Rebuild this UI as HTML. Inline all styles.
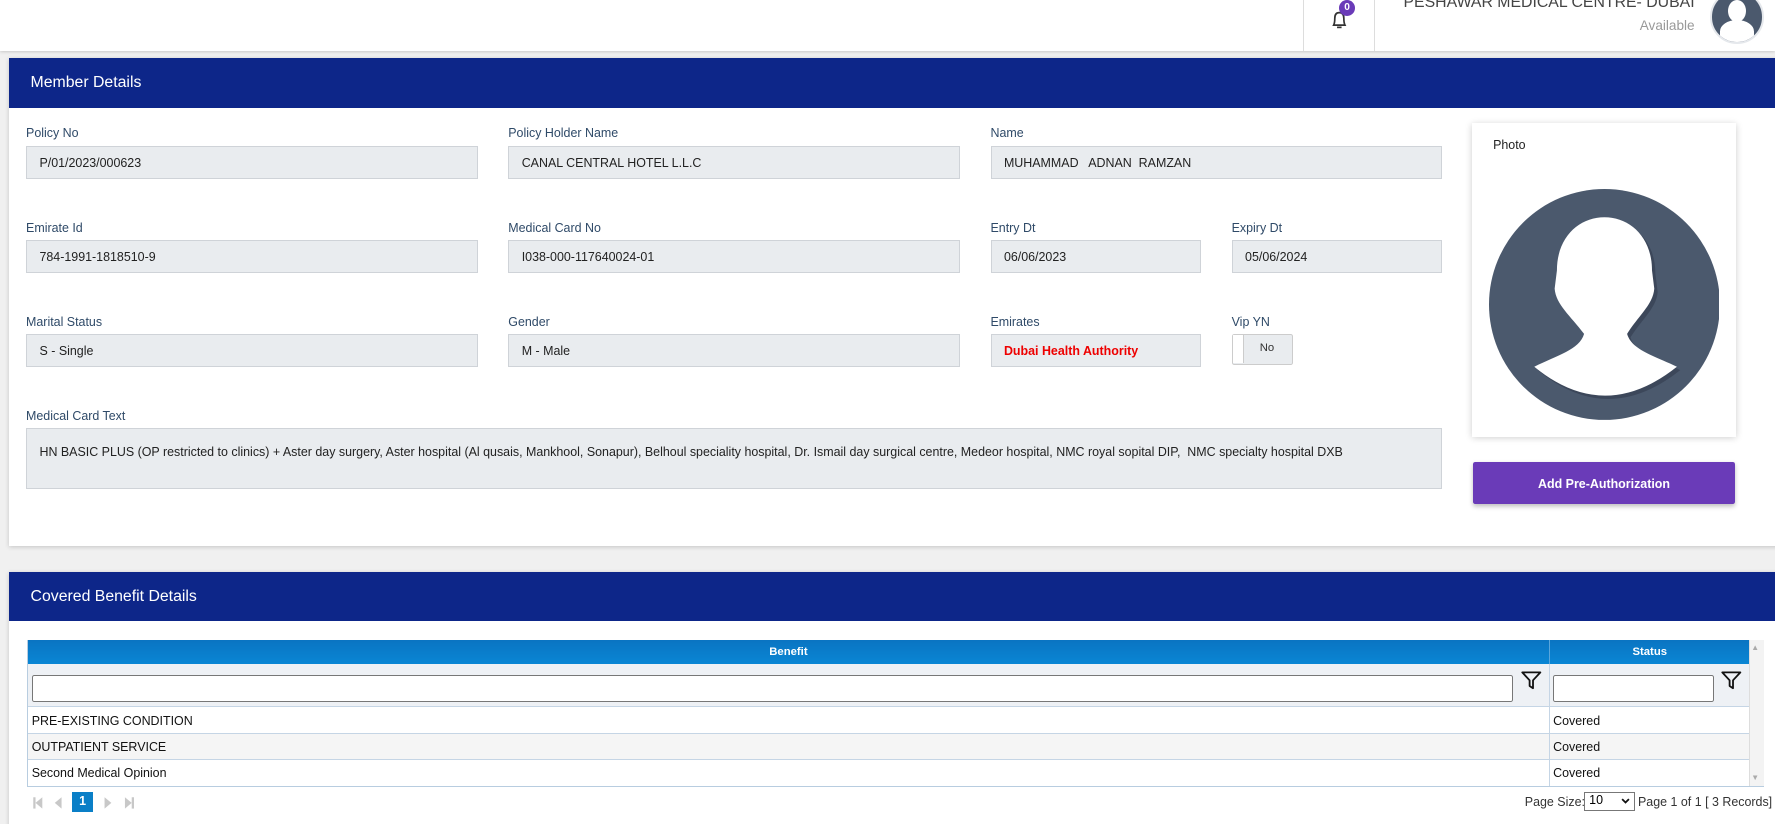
<!DOCTYPE html>
<html><head><meta charset="utf-8"><style>
html,body{margin:0;padding:0;}
body{width:1775px;height:824px;overflow:hidden;background:#f0f0f0;font-family:"Liberation Sans",Arial,sans-serif;}
#w{zoom:1.132;width:1568px;height:728px;position:relative;overflow:hidden;}
.a{position:absolute;}
.top{left:0;top:0;width:1568px;height:45px;background:#fff;box-shadow:0 1px 3px rgba(0,0,0,.2);}
.card{background:#fff;box-shadow:0 1px 4px rgba(0,0,0,.18);}
.hd{background:#0d2689;color:#fff;font-size:14px;height:44px;line-height:44px;padding-left:19px;}
.lb{font-size:11px;color:#2f4a68;}
.in{background:#e9ecef;border:1px solid #cfd3d8;box-sizing:border-box;height:29px;font-size:11px;color:#222;line-height:29px;padding-left:11px;}
.cell{font-size:11px;color:#111;line-height:23px;padding-left:3px;box-sizing:border-box;}
</style></head><body><div id="w">
<div class="a top">
 <div class="a" style="left:1151px;top:0;width:1px;height:45px;background:#ddd"></div>
 <div class="a" style="left:1214px;top:0;width:1px;height:45px;background:#ddd"></div>
 <svg class="a" style="left:1173px;top:6px" width="22" height="22" viewBox="0 0 22 22"><path d="M5 16 Q6 14 6 10 Q6 5 10 5 Q14 5 14 10 Q14 14 15 16 Z" fill="none" stroke="#333" stroke-width="1.5"/><path d="M8 18 H12" stroke="#333" stroke-width="1.5"/></svg>
 <div class="a" style="left:1183px;top:0;width:14px;height:14px;border-radius:50%;background:#6a3bb8;color:#fff;font-size:9px;font-weight:bold;text-align:center;line-height:14px">0</div>
 <div class="a" style="right:71px;top:-5px;font-size:14px;color:#444;white-space:nowrap">PESHAWAR MEDICAL CENTRE- DUBAI</div>
 <div class="a" style="right:71px;top:16px;font-size:12px;color:#999">Available</div>
 <div class="a" style="left:1511px;top:-9px;width:44px;height:44px;border-radius:50%;background:#4b596d;border:2px solid #e5e8ec;overflow:hidden">
  <div class="a" style="left:14px;top:7px;width:16px;height:20px;border-radius:50%;background:#fff"></div>
  <div class="a" style="left:7px;top:25px;width:30px;height:20px;border-radius:50% 50% 0 0;background:#fff"></div>
 </div>
</div>

<div class="a card" style="left:8px;top:51px;width:1570px;height:431px">
 <div class="hd">Member Details</div>
</div>
<div class="a lb" style="left:23px;top:111px">Policy No</div>
<div class="a in" style="left:23px;top:129px;width:399px">P/01/2023/000623</div>
<div class="a lb" style="left:449px;top:111px">Policy Holder Name</div>
<div class="a in" style="left:449px;top:129px;width:399px">CANAL CENTRAL HOTEL L.L.C</div>
<div class="a lb" style="left:875px;top:111px">Name</div>
<div class="a in" style="left:875px;top:129px;width:399px;white-space:pre">MUHAMMAD   ADNAN  RAMZAN</div>

<div class="a lb" style="left:23px;top:195px">Emirate Id</div>
<div class="a in" style="left:23px;top:212px;width:399px">784-1991-1818510-9</div>
<div class="a lb" style="left:449px;top:195px">Medical Card No</div>
<div class="a in" style="left:449px;top:212px;width:399px">I038-000-117640024-01</div>
<div class="a lb" style="left:875px;top:195px">Entry Dt</div>
<div class="a in" style="left:875px;top:212px;width:186px">06/06/2023</div>
<div class="a lb" style="left:1088px;top:195px">Expiry Dt</div>
<div class="a in" style="left:1088px;top:212px;width:186px">05/06/2024</div>

<div class="a lb" style="left:23px;top:278px">Marital Status</div>
<div class="a in" style="left:23px;top:295px;width:399px">S - Single</div>
<div class="a lb" style="left:449px;top:278px">Gender</div>
<div class="a in" style="left:449px;top:295px;width:399px">M - Male</div>
<div class="a lb" style="left:875px;top:278px">Emirates</div>
<div class="a in" style="left:875px;top:295px;width:186px;color:#e00;font-weight:bold">Dubai Health Authority</div>
<div class="a lb" style="left:1088px;top:278px">Vip YN</div>
<div class="a" style="left:1088px;top:295px;width:54px;height:27px;border:1px solid #ccc;box-sizing:border-box;border-radius:2px;background:#e9ecef">
 <div class="a" style="left:0;top:0;width:9px;height:25px;background:#fff;border-right:1px solid #ccc"></div>
 <div class="a" style="left:24px;top:6px;font-size:10px;color:#333">No</div>
</div>

<div class="a lb" style="left:23px;top:361px">Medical Card Text</div>
<div class="a in" style="left:23px;top:378px;width:1251px;height:54px;line-height:13px;padding-top:14px;white-space:nowrap">HN BASIC PLUS (OP restricted to clinics) + Aster day surgery, Aster hospital (Al qusais, Mankhool, Sonapur), Belhoul speciality hospital, Dr. Ismail day surgical centre, Medeor hospital, NMC royal sopital DIP,&nbsp; NMC specialty hospital DXB</div>

<div class="a card" style="left:1300px;top:109px;width:234px;height:277px;box-shadow:0 1px 6px rgba(0,0,0,.2)">
 <div class="a" style="left:19px;top:13px;font-size:11px;color:#222">Photo</div>
 <svg class="a" style="left:15px;top:58px" width="204" height="204" viewBox="0 0 204 204">
  <circle cx="102" cy="102" r="102" fill="#4b596d"/>
  <path d="M84 128 C72 112 59 102 58 88 L60 72 C60 42 80 25 102 25 C124 25 144 42 144 72 L146 88 C145 102 132 112 122 128 C126 142 145 147 166 157 Q102 208 40 157 C60 147 80 142 84 128 Z" fill="#3c475a" transform="translate(3,3)"/>
  <path d="M84 128 C72 112 59 102 58 88 L60 72 C60 42 80 25 102 25 C124 25 144 42 144 72 L146 88 C145 102 132 112 122 128 C126 142 145 147 166 157 Q102 208 40 157 C60 147 80 142 84 128 Z" fill="#fff"/>
 </svg>
</div>
<div class="a" style="left:1301px;top:408px;width:232px;height:37px;background:#6a3bb8;color:#fff;font-size:11px;font-weight:bold;text-align:center;line-height:39px;border-radius:2px;box-shadow:0 2px 4px rgba(0,0,0,.25)">Add Pre-Authorization</div>

<div class="a card" style="left:8px;top:505px;width:1570px;height:240px">
 <div class="hd">Covered Benefit Details</div>
</div>
<div class="a" style="left:24px;top:565px;width:1534px;height:130px;border:1px solid #b8cde0;box-sizing:border-box"></div>
<div class="a" style="left:25px;top:565px;width:1520px;height:22px;background:linear-gradient(#0a74c2,#0a86d4);color:#fff;font-size:10px;font-weight:bold;line-height:22px">
 <div class="a" style="left:0;width:1343px;text-align:center">Benefit</div>
 <div class="a" style="left:1343px;width:177px;text-align:center;border-left:1px solid #5aa6dc;height:22px">Status</div>
</div>
<div class="a" style="left:25px;top:587px;width:1520px;height:38px;background:#eef1f5;border-bottom:1px solid #c5d5e5;box-sizing:border-box"></div>
<div class="a" style="left:28px;top:596px;width:1309px;height:24px;background:#fff;border:1px solid #777;box-sizing:border-box;border-radius:2px"></div>
<div class="a" style="left:1368px;top:587px;width:1px;height:107px;background:#c5d5e5"></div>
<div class="a" style="left:1372px;top:596px;width:142px;height:24px;background:#fff;border:1px solid #777;box-sizing:border-box;border-radius:2px"></div>
<svg class="a" style="left:1343px;top:591px" width="20" height="20" viewBox="0 0 20 20"><path d="M2 3 H18 L11.5 10 V17 L8.5 15 V10 Z" fill="none" stroke="#111" stroke-width="1.6" stroke-linejoin="round"/></svg>
<svg class="a" style="left:1519px;top:591px" width="20" height="20" viewBox="0 0 20 20"><path d="M2 3 H18 L11.5 10 V17 L8.5 15 V10 Z" fill="none" stroke="#111" stroke-width="1.6" stroke-linejoin="round"/></svg>
<div class="a cell" style="left:25px;top:625px;width:1520px;height:23px;background:#fff;border-bottom:1px solid #c5d5e5">PRE-EXISTING CONDITION</div>
<div class="a cell" style="left:25px;top:648px;width:1520px;height:23px;background:#f5f5f5;border-bottom:1px solid #c5d5e5">OUTPATIENT SERVICE</div>
<div class="a cell" style="left:25px;top:671px;width:1520px;height:23px;background:#fff">Second Medical Opinion</div>
<div class="a cell" style="left:1369px;top:625px;">Covered</div>
<div class="a cell" style="left:1369px;top:648px;">Covered</div>
<div class="a cell" style="left:1369px;top:671px;">Covered</div>
<div class="a" style="left:1368px;top:625px;width:1px;height:69px;background:#c5d5e5"></div>
<div class="a" style="left:1545px;top:565px;width:12px;height:129px;background:#f3f3f3;border-left:1px solid #ddd"></div>
<div class="a" style="left:1547px;top:568px;font-size:7px;color:#aaa">▲</div>
<div class="a" style="left:1547px;top:683px;font-size:7px;color:#aaa">▼</div>

<svg class="a" style="left:27px;top:702px" width="100" height="14" viewBox="0 0 100 14">
 <g fill="#c8c8c8"><rect x="2" y="2" width="2" height="10"/><path d="M10 2 L4 7 L10 12Z"/><path d="M27 2 L21 7 L27 12Z"/>
 <path d="M65 2 L71 7 L65 12Z"/><path d="M83 2 L89 7 L83 12Z"/><rect x="89" y="2" width="2" height="10"/></g>
</svg>
<div class="a" style="left:64px;top:700px;width:18px;height:17px;background:#0a7fc7;color:#fff;font-size:11px;font-weight:bold;text-align:center;line-height:17px">1</div>
<div class="a" style="left:1347px;top:702px;font-size:11px;color:#333">Page Size:</div>
<div class="a" style="left:1399px;top:700px;width:45px;height:16px;border:1px solid #777;box-sizing:border-box;font-size:11px;line-height:14px;padding-left:4px;background:#fff">10<svg class="a" style="right:3px;top:4px" width="8" height="6" viewBox="0 0 8 6"><path d="M1 1 L4 4 L7 1" fill="none" stroke="#111" stroke-width="1.6"/></svg></div>
<div class="a" style="left:1447px;top:702px;font-size:11px;color:#333;white-space:nowrap">Page 1 of 1 [ 3 Records]</div>
</div></body></html>
